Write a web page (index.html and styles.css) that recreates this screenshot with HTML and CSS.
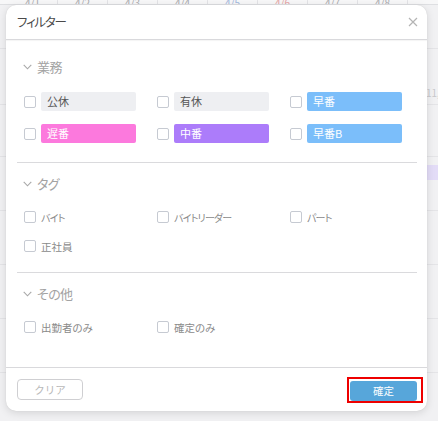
FILE: index.html
```html
<!DOCTYPE html>
<html lang="ja">
<head>
<meta charset="utf-8">
<title>フィルター</title>
<link rel="stylesheet" href="styles.css">
</head>
<body>
<div class="cal">
  <div class="cal-head">
    <span class="edge"></span>
    <span class="day">4/1</span><span class="day">4/2</span><span class="day">4/3</span><span class="day">4/4</span>
    <span class="day sat">4/5</span><span class="day sun">4/6</span><span class="day">4/7</span><span class="day">4/8</span>
    <span class="edge"></span>
  </div>
  <div class="cal-row r1"></div>
  <div class="cal-row r2"><span class="note">11,0</span></div>
  <div class="cal-row r3"></div>
  <div class="cal-row r4"><span class="chip"></span></div>
  <div class="cal-row r5"></div>
  <div class="cal-row r6"></div>
  <div class="cal-row r7"></div>
  <div class="cal-row r8"></div>
</div>

<div class="modal">
  <div class="modal-header">
    <span class="title">フィルター</span>
    <svg class="close" width="10" height="10" viewBox="0 0 10 10"><path d="M1 1L9 9M9 1L1 9" stroke="#b4b4b4" stroke-width="1.2" fill="none"/></svg>
  </div>
  <div class="modal-body">
    <section class="sec first">
      <div class="sec-title">
        <svg class="chev" width="9" height="6" viewBox="0 0 9 6"><path d="M0.7 0.8L4.5 4.8L8.3 0.8" stroke="#a8a8a8" stroke-width="1.1" fill="none"/></svg>
        <span>業務</span>
      </div>
      <div class="grid boxes">
        <label class="item"><span class="cb"></span><span class="tag gray">公休</span></label>
        <label class="item"><span class="cb"></span><span class="tag gray">有休</span></label>
        <label class="item"><span class="cb"></span><span class="tag blue">早番</span></label>
        <label class="item"><span class="cb"></span><span class="tag pink">遅番</span></label>
        <label class="item"><span class="cb"></span><span class="tag purple">中番</span></label>
        <label class="item"><span class="cb"></span><span class="tag blue">早番B</span></label>
      </div>
    </section>
    <section class="sec">
      <div class="sec-title">
        <svg class="chev" width="9" height="6" viewBox="0 0 9 6"><path d="M0.7 0.8L4.5 4.8L8.3 0.8" stroke="#a8a8a8" stroke-width="1.1" fill="none"/></svg>
        <span>タグ</span>
      </div>
      <div class="grid texts">
        <label class="item"><span class="cb"></span><span class="txt kana">バイト</span></label>
        <label class="item"><span class="cb"></span><span class="txt kana">バイトリーダー</span></label>
        <label class="item"><span class="cb"></span><span class="txt kana">パート</span></label>
        <label class="item"><span class="cb"></span><span class="txt">正社員</span></label>
      </div>
    </section>
    <section class="sec last">
      <div class="sec-title">
        <svg class="chev" width="9" height="6" viewBox="0 0 9 6"><path d="M0.7 0.8L4.5 4.8L8.3 0.8" stroke="#a8a8a8" stroke-width="1.1" fill="none"/></svg>
        <span>その他</span>
      </div>
      <div class="grid texts">
        <label class="item"><span class="cb"></span><span class="txt">出勤者のみ</span></label>
        <label class="item"><span class="cb"></span><span class="txt">確定のみ</span></label>
      </div>
    </section>
  </div>
  <div class="modal-footer">
    <button class="btn-clear">クリア</button>
    <span class="highlight"><button class="btn-ok">確定</button></span>
  </div>
</div>
</body>
</html>
```
FILE: styles.css
```css
* { box-sizing: border-box; }
html, body { margin: 0; padding: 0; }
body {
  width: 438px;
  height: 421px;
  overflow: hidden;
  background: #f1f1f3;
  font-family: "Noto Sans CJK JP", "Noto Sans", sans-serif;
  font-feature-settings: "palt";
  position: relative;
}

/* backdrop calendar */
.cal { display: flex; flex-direction: column; }
.cal-head {
  display: grid;
  grid-template-columns: 8px repeat(8, 50px) 30px;
  height: 5px;
  border-bottom: 1px solid #dedfe2;
  background: #f7f7f8;
  overflow: hidden;
}
.cal-head .day {
  font-size: 10px;
  line-height: 6px;
  text-align: center;
  color: #a9a9ad;
  border-right: 1px solid #e3e3e6;
}
.cal-head .sat { color: #9fb6dd; }
.cal-head .sun { color: #e6a3a3; }
.cal-row {
  height: 54px;
  border-bottom: 1px solid #e4e4e7;
  display: flex;
  justify-content: flex-end;
  align-items: flex-start;
}
.cal-row.r1 { height: 44px; }
.cal-row.r2 { height: 56px; }
.cal-row.r3 { height: 52px; }
.note {
  font-size: 10px;
  color: #c8c8cc;
  margin-top: 36px;
  width: 12px;
  overflow: hidden;
  white-space: nowrap;
}
.chip {
  width: 30px;
  height: 15px;
  margin-top: 8px;
  background: #e3dcf7;
}

/* modal */
.modal {
  position: absolute;
  left: 6px;
  top: 5px;
  width: 421px;
  height: 406px;
  background: #fff;
  border-radius: 10px;
  box-shadow: 0 2px 8px rgba(0,0,0,0.12), 0 0 1px rgba(0,0,0,0.15);
  display: flex;
  flex-direction: column;
  overflow: hidden;
}
.modal-header {
  height: 35px;
  padding: 0 9px 0 11px;
  display: flex;
  align-items: center;
  justify-content: space-between;
  border-bottom: 1px solid #d9d9dc;
  box-shadow: 0 1px 1px rgba(0,0,0,0.04);
}
.title {
  font-size: 12.5px;
  letter-spacing: -1.2px;
  color: #4a4a4a;
  margin-top: -2px;
}
.close { display: block; margin-top: -1px; }

.modal-body {
  flex: 1;
  padding: 0 10px 0 11px;
}
.sec {
  padding: 12px 0 18px;
  border-bottom: 1px solid #dadadd;
}
.sec.first { padding-top: 18px; padding-bottom: 19px; }
.sec.last { border-bottom: none; padding-bottom: 0; }
.sec-title {
  height: 16px;
  display: flex;
  align-items: center;
  gap: 5px;
  padding-left: 6px;
  font-size: 13px;
  letter-spacing: -0.6px;
  color: #a3a3a3;
}
.chev { display: block; margin-top: 1px; }

.grid {
  display: grid;
  grid-template-columns: 133px 133px 1fr;
  padding-left: 7px;
  margin-top: 18px;
  row-gap: 13px;
}
.item {
  display: flex;
  align-items: center;
  gap: 5px;
}
.boxes .item { height: 19px; }
.texts .item { height: 16px; }
.cb {
  width: 12px;
  height: 12px;
  border: 1px solid #c6cad2;
  border-radius: 2px;
  background: #fff;
  flex: none;
}
.tag {
  width: 95px;
  height: 19px;
  border-radius: 2px;
  font-size: 11px;
  line-height: 19px;
  padding-left: 6px;
  color: #fff;
}
.tag.gray { background: #eeeff2; color: #555; }
.tag.blue { background: #7bbefa; }
.tag.pink { background: #fc79dd; }
.tag.purple { background: #ac7cfa; }
.txt {
  font-size: 10.5px;
  color: #8a8a8a;
}
.txt.kana {
  font-size: 10px;
  letter-spacing: -0.8px;
}

.modal-footer {
  height: 44px;
  border-top: 1px solid #d9d9dc;
  display: flex;
  align-items: center;
  justify-content: space-between;
  padding: 0 4px 0 11px;
}
.btn-clear {
  width: 66px;
  height: 21px;
  border: 1px solid #cfcfd2;
  border-radius: 4px;
  background: #fff;
  font-family: inherit;
  font-size: 10.5px;
  color: #b8b8b8;
  padding: 0;
}
.highlight {
  display: flex;
  border: 2px solid #ee0000;
  padding: 2px 4px 0 1px;
}
.btn-ok {
  width: 67px;
  height: 20px;
  border: none;
  border-radius: 3px;
  background: #57a6da;
  color: #fff;
  font-family: inherit;
  font-size: 10.5px;
  padding: 0;
}
```
